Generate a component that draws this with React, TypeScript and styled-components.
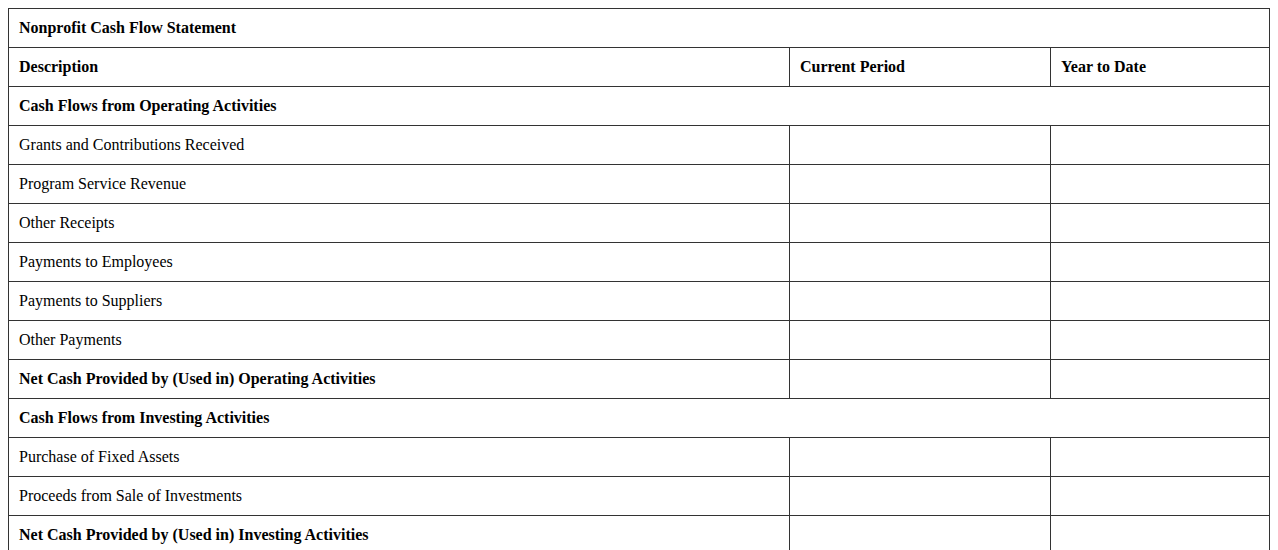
import React from 'react';
import styled, { createGlobalStyle } from 'styled-components';

const GlobalStyle = createGlobalStyle`
  body {
    margin: 8px;
    background: #fff;
    font-family: "Liberation Serif", "Times New Roman", serif;
    color: #000;
  }
`;

const Table = styled.table`
  width: 100%;
  border-collapse: collapse;
  font-size: 16px;
`;

const Cell = styled.td<{ $bold?: boolean }>`
  border: 1px solid #333;
  padding: 10px;
  line-height: 18px;
  text-align: left;
  font-weight: ${(p) => (p.$bold ? 'bold' : 'normal')};
`;

const HeadCell = styled.th`
  border: 1px solid #333;
  padding: 10px;
  line-height: 18px;
  text-align: left;
  font-weight: bold;
`;

type Row =
  | { kind: 'section'; label: string }
  | { kind: 'line'; label: string; bold?: boolean };

const rows: Row[] = [
  { kind: 'section', label: 'Cash Flows from Operating Activities' },
  { kind: 'line', label: 'Grants and Contributions Received' },
  { kind: 'line', label: 'Program Service Revenue' },
  { kind: 'line', label: 'Other Receipts' },
  { kind: 'line', label: 'Payments to Employees' },
  { kind: 'line', label: 'Payments to Suppliers' },
  { kind: 'line', label: 'Other Payments' },
  { kind: 'line', label: 'Net Cash Provided by (Used in) Operating Activities', bold: true },
  { kind: 'section', label: 'Cash Flows from Investing Activities' },
  { kind: 'line', label: 'Purchase of Fixed Assets' },
  { kind: 'line', label: 'Proceeds from Sale of Investments' },
  { kind: 'line', label: 'Net Cash Provided by (Used in) Investing Activities', bold: true },
];

export default function App() {
  return (
    <>
      <GlobalStyle />
      <Table>
        <colgroup>
          <col style={{ width: 781 }} />
          <col style={{ width: 261 }} />
          <col />
        </colgroup>
        <thead>
          <tr>
            <HeadCell colSpan={3}>Nonprofit Cash Flow Statement</HeadCell>
          </tr>
          <tr>
            <HeadCell>Description</HeadCell>
            <HeadCell>Current Period</HeadCell>
            <HeadCell>Year to Date</HeadCell>
          </tr>
        </thead>
        <tbody>
          {rows.map((row) =>
            row.kind === 'section' ? (
              <tr key={row.label}>
                <Cell colSpan={3} $bold>
                  {row.label}
                </Cell>
              </tr>
            ) : (
              <tr key={row.label}>
                <Cell $bold={row.bold}>{row.label}</Cell>
                <Cell />
                <Cell />
              </tr>
            )
          )}
        </tbody>
      </Table>
    </>
  );
}
